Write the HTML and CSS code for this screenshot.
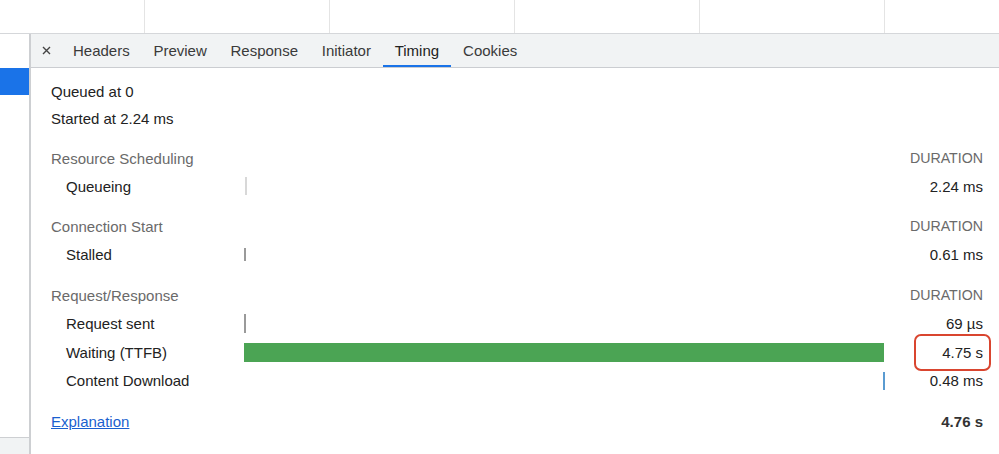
FILE: index.html
```html
<!DOCTYPE html>
<html>
<head>
<meta charset="utf-8">
<link rel="stylesheet" href="styles.css">
</head>
<body>
<div class="top">
  <div class="col c1"></div>
  <div class="col"></div>
  <div class="col"></div>
  <div class="col"></div>
  <div class="col"></div>
  <div class="col last"></div>
</div>
<div class="main">
  <div class="side">
    <div class="side-sel"></div>
    <div class="side-fill"></div>
    <div class="side-foot"></div>
  </div>
  <div class="panel">
    <div class="tabs">
      <div class="close"><svg width="9" height="9" viewBox="0 0 9 9"><path d="M1 1L8 8M8 1L1 8" stroke="#444" stroke-width="1.4" fill="none"/></svg></div>
      <div class="tab">Headers</div>
      <div class="tab">Preview</div>
      <div class="tab">Response</div>
      <div class="tab">Initiator</div>
      <div class="tab active">Timing</div>
      <div class="tab">Cookies</div>
    </div>
    <div class="content">
      <div class="line">Queued at 0</div>
      <div class="line">Started at 2.24 ms</div>

      <div class="section s1">
        <div class="head">Resource Scheduling</div><div class="headbar"></div><div class="dur-h">DURATION</div>
        <div class="label">Queueing</div><div class="bar"><span class="seg light" style="left:0.15%;width:2px"></span></div><div class="val">2.24 ms</div>
      </div>

      <div class="section s2">
        <div class="head">Connection Start</div><div class="headbar"></div><div class="dur-h">DURATION</div>
        <div class="label">Stalled</div><div class="bar"><span class="seg dark short" style="left:0%;width:1.5px"></span></div><div class="val">0.61 ms</div>
      </div>

      <div class="section s3">
        <div class="head">Request/Response</div><div class="headbar"></div><div class="dur-h">DURATION</div>
        <div class="label">Request sent</div><div class="bar"><span class="seg dark" style="left:0%;width:1.5px"></span></div><div class="val">69 µs</div>
        <div class="label">Waiting (TTFB)</div><div class="bar"><span class="seg green" style="left:0%;width:100%"></span></div><div class="val"><span class="mark"></span>4.75 s</div>
        <div class="label">Content Download</div><div class="bar"><span class="seg blue" style="left:99.85%;width:1.5px"></span></div><div class="val">0.48 ms</div>
      </div>

      <div class="total">
        <a class="link" href="#">Explanation</a>
        <div class="sum">4.76 s</div>
      </div>
    </div>
  </div>
</div>
</body>
</html>
```
FILE: styles.css
```css
html, body {
  margin: 0;
  padding: 0;
  background: #fff;
}
body {
  width: 999px;
  height: 454px;
  overflow: hidden;
  font-family: "Liberation Sans", Arial, Helvetica, sans-serif;
  font-size: 15px;
  color: #222;
}
.top {
  display: flex;
  height: 34px;
  box-sizing: border-box;
  border-bottom: 1px solid #d5d7da;
}
.col {
  width: 185px;
  box-sizing: border-box;
  border-right: 1px solid #e4e4e4;
}
.col.c1 { width: 145px; }
.col.last { flex: 1; border-right: none; }

.main {
  display: flex;
  height: 420px;
}
.side {
  width: 29px;
  border-right: 2px solid #cdcfd2;
  display: flex;
  flex-direction: column;
}
.side-sel {
  margin-top: 34px;
  height: 27px;
  background: #1a73e8;
}
.side-fill { flex: 1; }
.side-foot {
  height: 16px;
  border-top: 1px solid #cdcfd2;
  background: #f1f3f4;
}
.panel {
  flex: 1;
  display: flex;
  flex-direction: column;
}
.tabs {
  height: 34px;
  box-sizing: border-box;
  background: #f1f3f4;
  border-bottom: 1px solid #cbcdd1;
  display: flex;
  align-items: stretch;
  color: #3a3a3a;
}
.close {
  width: 30px;
  display: flex;
  align-items: center;
  justify-content: center;
}
.tab {
  padding: 0 12px;
  display: flex;
  align-items: center;
  box-sizing: border-box;
  border-bottom: 2px solid transparent;
  padding-top: 2px;
}
.tab:nth-child(3),
.tab:nth-child(4),
.tab:nth-child(5),
.tab:nth-child(6) { margin-left: -0.3px; }
.tab.active {
  border-bottom-color: #1a73e8;
  color: #222;
}
.content {
  padding: 10px 16px 0 20px;
}
.line {
  height: 27px;
  line-height: 27px;
}
.section {
  display: grid;
  grid-template-columns: 193px 640px 1fr;
  grid-template-rows: 29px;
  grid-auto-rows: 28.5px;
  align-items: center;
}
.section.s1 { margin-top: 11.5px; }
.section.s2 { margin-top: 10.5px; }
.section.s3 { margin-top: 11.5px; }
.head {
  color: #6a6a6a;
}
.dur-h {
  text-align: right;
  color: #6a6a6a;
  font-size: 14.2px;
}
.label {
  padding-left: 15px;
}
.bar {
  position: relative;
  height: 19px;
}
.seg {
  position: absolute;
  top: 0;
  bottom: 0;
}
.seg.light { background: #d8d8d8; top: 0; bottom: 1px; }
.seg.dark { background: #9a9a9a; }
.seg.dark.short { top: 3px; bottom: 3px; }
.seg.green { background: #4ba454; }
.seg.blue { background: #5a9bd1; top: 1px; bottom: 0; }
.val {
  text-align: right;
  position: relative;
}
.mark {
  position: absolute;
  right: -8px;
  top: -10px;
  width: 77px;
  height: 37px;
  box-sizing: border-box;
  border: 2.5px solid #d9452f;
  border-radius: 7px;
}
.total {
  margin-top: 12px;
  height: 28px;
  display: flex;
  align-items: center;
  justify-content: space-between;
}
.link {
  color: #1a5fcf;
  text-decoration: underline;
}
.sum {
  font-weight: bold;
  color: #333;
}
```
